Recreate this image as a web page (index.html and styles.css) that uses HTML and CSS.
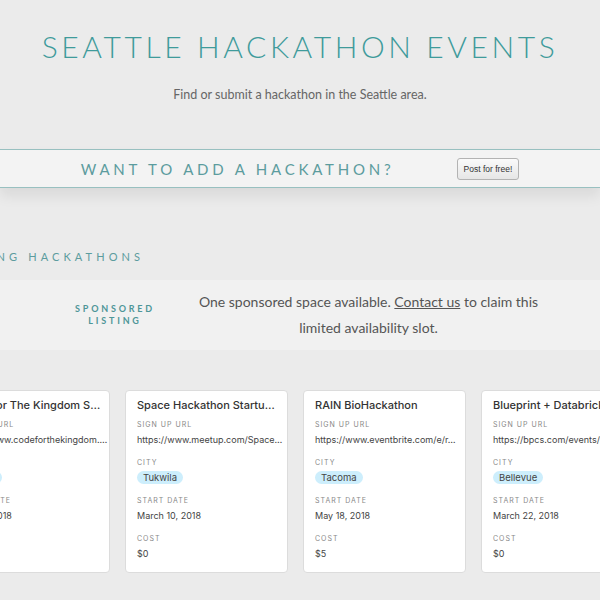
FILE: index.html
```html
<!DOCTYPE html>
<html lang="en">
  <head>
    <meta charset="UTF-8" />
    <meta name="viewport" content="width=device-width, initial-scale=1.0" />
    <title>Seattle Hackathon Events</title>
    <link rel="stylesheet" href="styles.css">
  </head>
  <body>
    <header>
      <h1>Seattle Hackathon Events</h1>
      <p class="tagline">Find or submit a hackathon in the Seattle area.</p>
    </header>

    <div class="banner">
      <h2>Want to add a hackathon?</h2>
      <button class="post-btn">Post for free!</button>
    </div>

    <section class="listings">
      <h3>Upcoming Hackathons</h3>

      <div class="sponsored">
        <div class="sponsored-label">Sponsored<br />Listing</div>
        <p class="sponsored-text">
          One sponsored space available. <a href="#">Contact us</a> to claim this
          limited availability slot.
        </p>
      </div>

      <div class="cards">
        <div class="card">
          <div class="card-title">Code For The Kingdom S…</div>
          <div class="label">Sign up URL</div>
          <div class="value">https://www.codeforthekingdom.…</div>
          <div class="label">City</div>
          <div class="value"><span class="pill">Seattle</span></div>
          <div class="label">Start date</div>
          <div class="value">April 6, 2018</div>
          <div class="label">Cost</div>
          <div class="value">$0</div>
        </div>
        <div class="card">
          <div class="card-title">Space Hackathon Startu…</div>
          <div class="label">Sign up URL</div>
          <div class="value">https://www.meetup.com/Space…</div>
          <div class="label">City</div>
          <div class="value"><span class="pill">Tukwila</span></div>
          <div class="label">Start date</div>
          <div class="value">March 10, 2018</div>
          <div class="label">Cost</div>
          <div class="value">$0</div>
        </div>
        <div class="card">
          <div class="card-title">RAIN BioHackathon</div>
          <div class="label">Sign up URL</div>
          <div class="value">https://www.eventbrite.com/e/r…</div>
          <div class="label">City</div>
          <div class="value"><span class="pill">Tacoma</span></div>
          <div class="label">Start date</div>
          <div class="value">May 18, 2018</div>
          <div class="label">Cost</div>
          <div class="value">$5</div>
        </div>
        <div class="card">
          <div class="card-title">Blueprint + Databricks…</div>
          <div class="label">Sign up URL</div>
          <div class="value">https://bpcs.com/events/bl…</div>
          <div class="label">City</div>
          <div class="value"><span class="pill">Bellevue</span></div>
          <div class="label">Start date</div>
          <div class="value">March 22, 2018</div>
          <div class="label">Cost</div>
          <div class="value">$0</div>
        </div>
      </div>
    </section>
  </body>
</html>
```

FILE: styles.css
```css
* {
  padding: 0;
  margin: 0;
  box-sizing: border-box;
}

body {
  background-color: #ebebeb;
  font-family: Lato, "Open Sans", sans-serif;
  overflow: hidden;
  width: 600px;
}

header {
  text-align: center;
  padding-top: 28px;
}

header h1 {
  font-weight: 300;
  font-size: 30px;
  letter-spacing: 3.6px;
  text-transform: uppercase;
  color: #3f9b9b;
  line-height: 36px;
}

.tagline {
  margin-top: 23px;
  font-size: 12.5px;
  color: #666;
}

.banner {
  margin-top: 47px;
  height: 39px;
  background-color: #f3f3f3;
  border-top: 1px solid #98c0c0;
  border-bottom: 1px solid #98c0c0;
  box-shadow: 0 8px 14px rgba(0, 0, 0, 0.08);
  display: flex;
  justify-content: center;
  align-items: center;
  gap: 62px;
}

.banner h2 {
  font-weight: 400;
  font-size: 15px;
  letter-spacing: 3.8px;
  text-transform: uppercase;
  color: #5c9c9e;
}

.post-btn {
  font-family: "Liberation Sans", Arial, sans-serif;
  font-size: 8.5px;
  color: #333;
  padding: 0 6px;
  height: 22px;
  border: 1px solid #b3b3b3;
  border-radius: 3px;
  background: linear-gradient(#fafafa, #e6e6e6);
}

.listings {
  margin-left: -72px;
  width: 820px;
}

.listings h3 {
  margin-top: 62px;
  font-weight: 400;
  font-size: 11px;
  letter-spacing: 4.1px;
  text-transform: uppercase;
  color: #5c9c9e;
}

.sponsored {
  margin-top: 17px;
  height: 70px;
  background-color: #f1f1f1;
  display: flex;
  align-items: center;
  padding-left: 110px;
}

.sponsored-label {
  width: 154px;
  text-align: center;
  font-weight: 700;
  font-size: 9px;
  letter-spacing: 2.8px;
  line-height: 12px;
  text-transform: uppercase;
  color: #4e9698;
}

.sponsored-text {
  width: 345px;
  margin-left: 4px;
  text-align: center;
  font-size: 14px;
  line-height: 26px;
  color: #555;
}

.sponsored-text a {
  color: #555;
}

.cards {
  display: flex;
  gap: 15px;
  margin-top: 40px;
  margin-left: 19px;
}

.card {
  width: 163px;
  flex-shrink: 0;
  height: 183px;
  background-color: white;
  border: 1px solid #dcdcdc;
  border-radius: 4px;
  padding: 6px 11px 12px;
  font-family: Inter, Roboto, sans-serif;
  white-space: nowrap;
  overflow: hidden;
}

.card-title {
  font-size: 11px;
  font-weight: 500;
  color: #333;
  line-height: 16px;
  margin-bottom: 6px;
}

.label {
  font-size: 7px;
  letter-spacing: 1px;
  text-transform: uppercase;
  color: #888;
  line-height: 12px;
}

.value {
  font-size: 9px;
  color: #444;
  line-height: 18px;
  margin-bottom: 8px;
}

.pill {
  display: inline-block;
  background-color: #cdeefc;
  border-radius: 7px;
  padding: 0 6px;
  line-height: 13px;
  font-size: 9.5px;
}
```
